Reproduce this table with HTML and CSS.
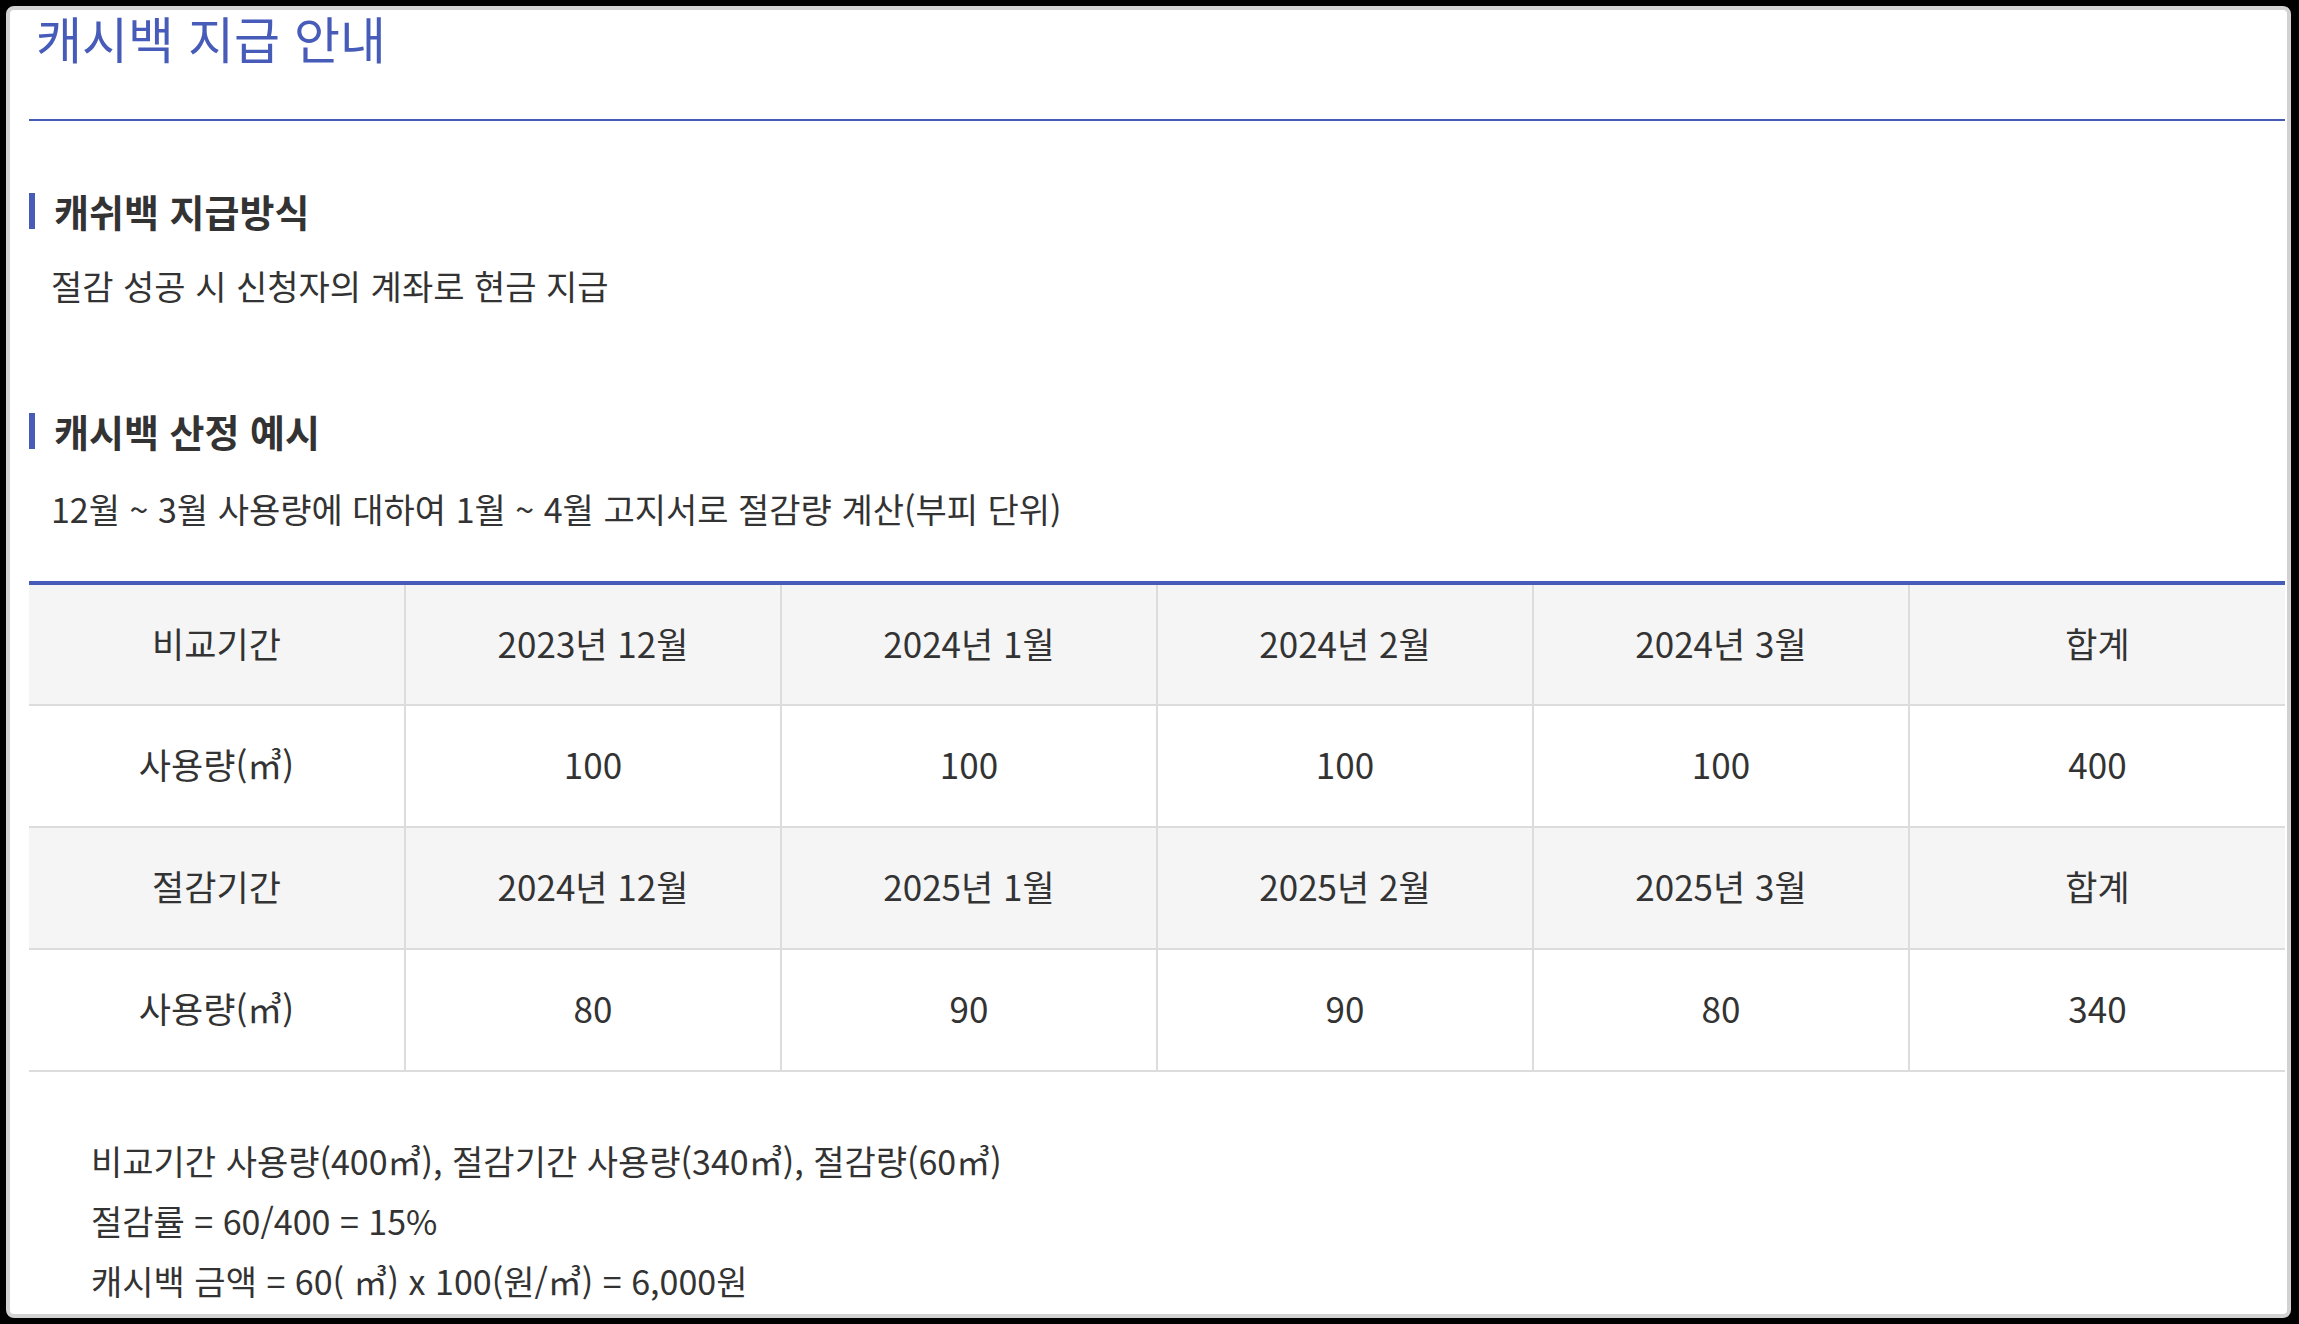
FILE: index.html
```html
<!DOCTYPE html>
<html lang="ko">
<head>
<meta charset="utf-8">
<title>캐시백 지급 안내</title>
<link rel="stylesheet" href="styles.css">
</head>
<body>
<div class="frame">
  <main class="card">
    <h1 class="page-title">캐시백 지급 안내</h1>

    <section class="section">
      <h2 class="section-title">캐쉬백 지급방식</h2>
      <p class="section-text">절감 성공 시 신청자의 계좌로 현금 지급</p>
    </section>

    <section class="section">
      <h2 class="section-title">캐시백 산정 예시</h2>
      <p class="section-text">12월 ~ 3월 사용량에 대하여 1월 ~ 4월 고지서로 절감량 계산(부피 단위)</p>
    </section>

    <table class="calc-table">
      <tbody>
        <tr class="row-head">
          <td>비교기간</td><td>2023년 12월</td><td>2024년 1월</td><td>2024년 2월</td><td>2024년 3월</td><td>합계</td>
        </tr>
        <tr>
          <td>사용량(㎥)</td><td>100</td><td>100</td><td>100</td><td>100</td><td>400</td>
        </tr>
        <tr class="row-head">
          <td>절감기간</td><td>2024년 12월</td><td>2025년 1월</td><td>2025년 2월</td><td>2025년 3월</td><td>합계</td>
        </tr>
        <tr>
          <td>사용량(㎥)</td><td>80</td><td>90</td><td>90</td><td>80</td><td>340</td>
        </tr>
      </tbody>
    </table>

    <div class="result">
      <p>비교기간 사용량(400㎥), 절감기간 사용량(340㎥), 절감량(60㎥)</p>
      <p>절감률 = 60/400 = 15%</p>
      <p>캐시백 금액 = 60( ㎥) x 100(원/㎥) = 6,000원</p>
    </div>
  </main>
</div>
</body>
</html>
```

FILE: styles.css
```css
* { box-sizing: border-box; }

html, body {
  margin: 0;
  padding: 0;
  background: #000;
}

body {
  font-family: "Noto Sans CJK KR", "Noto Sans", sans-serif;
  color: #333;
}

.frame {
  padding: 6px 8px 6px 6px;
  height: 1324px;
  overflow: hidden;
}

.card {
  height: 1312px;
  background: #fff;
  border: 4px solid #d2d2d2;
  border-radius: 8px;
  padding: 0 2px 0 19px;
}

.page-title {
  margin: 2px 0 0;
  padding: 0 0 57px 7px;
  font-size: 50px;
  line-height: 50px;
  font-weight: 400;
  color: #475bb9;
  border-bottom: 2px solid #475bb9;
}

.section-title {
  margin: 72px 0 0;
  padding-left: 19px;
  border-left: 6px solid #475bb9;
  font-size: 38px;
  line-height: 36px;
  font-weight: 700;
  color: #333;
}

.section + .section .section-title {
  margin-top: 107px;
}

.section-text {
  margin: 37px 0 0;
  padding-left: 22px;
  font-size: 34px;
  line-height: 40px;
  color: #333;
}

.section + .section .section-text {
  margin-top: 40px;
}

.calc-table {
  width: 100%;
  margin-top: 52px;
  border-collapse: collapse;
  table-layout: fixed;
  border-top: 4px solid #475bb9;
}

.calc-table td {
  height: 122px;
  border-bottom: 2px solid #dcdcdc;
  border-left: 2px solid #dcdcdc;
  text-align: center;
  vertical-align: middle;
  font-size: 35px;
  color: #333;
  padding: 0 0 5px;
}

.calc-table td:first-child {
  border-left: none;
}

.row-head td {
  background: #f5f5f5;
}

.result {
  margin-top: 59px;
  padding-left: 62px;
}

.result p {
  margin: 0;
  font-size: 34px;
  line-height: 60px;
  color: #333;
}
```
